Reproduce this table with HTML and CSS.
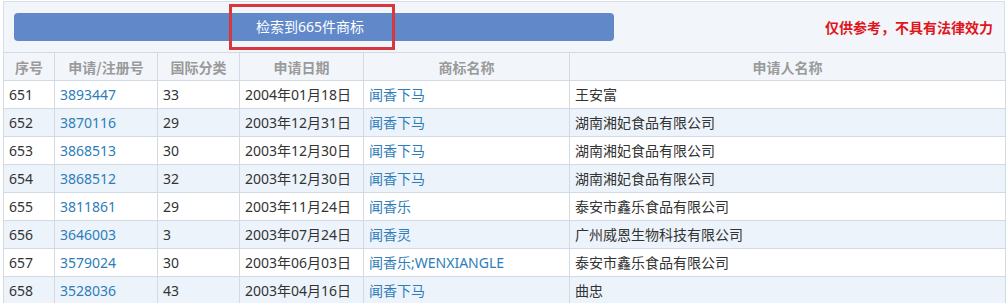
FILE: index.html
```html
<!DOCTYPE html>
<html lang="zh-CN">
<head>
<meta charset="utf-8">
<title>商标检索结果</title>
<link rel="stylesheet" href="styles.css">
</head>
<body>
<div class="wrap">
  <div class="panel">
    <div class="bar">检索到665件商标</div>
    <div class="note">仅供参考，不具有法律效力</div>
    <div class="mark"></div>
  </div>
  <table class="grid">
    <colgroup>
      <col class="c-no"><col class="c-reg"><col class="c-cls"><col class="c-date"><col class="c-name"><col class="c-app">
    </colgroup>
    <thead>
      <tr><th>序号</th><th>申请/注册号</th><th>国际分类</th><th>申请日期</th><th>商标名称</th><th>申请人名称</th></tr>
    </thead>
    <tbody>
      <tr><td>651</td><td class="lnk">3893447</td><td>33</td><td>2004年01月18日</td><td class="lnk">闻香下马</td><td>王安富</td></tr>
      <tr class="alt"><td>652</td><td class="lnk">3870116</td><td>29</td><td>2003年12月31日</td><td class="lnk">闻香下马</td><td>湖南湘妃食品有限公司</td></tr>
      <tr><td>653</td><td class="lnk">3868513</td><td>30</td><td>2003年12月30日</td><td class="lnk">闻香下马</td><td>湖南湘妃食品有限公司</td></tr>
      <tr class="alt"><td>654</td><td class="lnk">3868512</td><td>32</td><td>2003年12月30日</td><td class="lnk">闻香下马</td><td>湖南湘妃食品有限公司</td></tr>
      <tr><td>655</td><td class="lnk">3811861</td><td>29</td><td>2003年11月24日</td><td class="lnk">闻香乐</td><td>泰安市鑫乐食品有限公司</td></tr>
      <tr class="alt"><td>656</td><td class="lnk">3646003</td><td>3</td><td>2003年07月24日</td><td class="lnk">闻香灵</td><td>广州威恩生物科技有限公司</td></tr>
      <tr><td>657</td><td class="lnk">3579024</td><td>30</td><td>2003年06月03日</td><td class="lnk">闻香乐;WENXIANGLE</td><td>泰安市鑫乐食品有限公司</td></tr>
      <tr class="alt"><td>658</td><td class="lnk">3528036</td><td>43</td><td>2003年04月16日</td><td class="lnk">闻香下马</td><td>曲忠</td></tr>
    </tbody>
  </table>
</div>
</body>
</html>
```

FILE: styles.css
```css
html, body {
  margin: 0;
  padding: 0;
  background: #ffffff;
}
body {
  font-family: "Noto Sans", "Noto Sans CJK SC", sans-serif;
  font-size: 14px;
  color: #333333;
}
.wrap {
  margin: 1px 0 0 3px;
  width: 1002px;
}
.panel {
  position: relative;
  box-sizing: border-box;
  height: 51px;
  border: 1px solid #d6dee8;
  border-bottom: none;
  background: #f2f6fb;
  display: flex;
  align-items: center;
  justify-content: space-between;
  padding: 0 11px 1px 10px;
}
.bar {
  width: 600px;
  height: 28px;
  border-radius: 4px;
  background: #6189ca;
  color: #ffffff;
  font-size: 14px;
  line-height: 28px;
  text-align: center;
  text-indent: -8px;
}
.note {
  color: #e0161b;
  font-weight: bold;
  font-size: 14px;
  line-height: 20px;
  font-family: "Noto Sans CJK SC", sans-serif;
}
.mark {
  position: absolute;
  left: 225px;
  top: 2px;
  width: 160px;
  height: 40px;
  border: 3px solid #d6383e;
}
.grid {
  border-collapse: collapse;
  table-layout: fixed;
  width: 1002px;
}
.c-no { width: 51px; }
.c-reg { width: 103px; }
.c-cls { width: 82px; }
.c-date { width: 124px; }
.c-name { width: 206px; }
.c-app { width: 436px; }
.grid tr {
  height: 28px;
}
.grid th, .grid td {
  border: 1px solid #d2dae4;
  height: 28px;
  padding: 0 5px;
  box-sizing: border-box;
  white-space: nowrap;
  overflow: hidden;
  line-height: 26px;
}
.grid th {
  background: #f2f6fb;
  color: #9a9a9a;
  font-weight: bold;
  font-size: 14px;
  text-align: center;
  font-family: "Noto Sans CJK SC", sans-serif;
}
.grid td {
  text-align: left;
  color: #333333;
  font-size: 14px;
}
.grid td.lnk {
  color: #2d7db9;
}
.grid tr.alt td {
  background: #edf3fa;
}
```
